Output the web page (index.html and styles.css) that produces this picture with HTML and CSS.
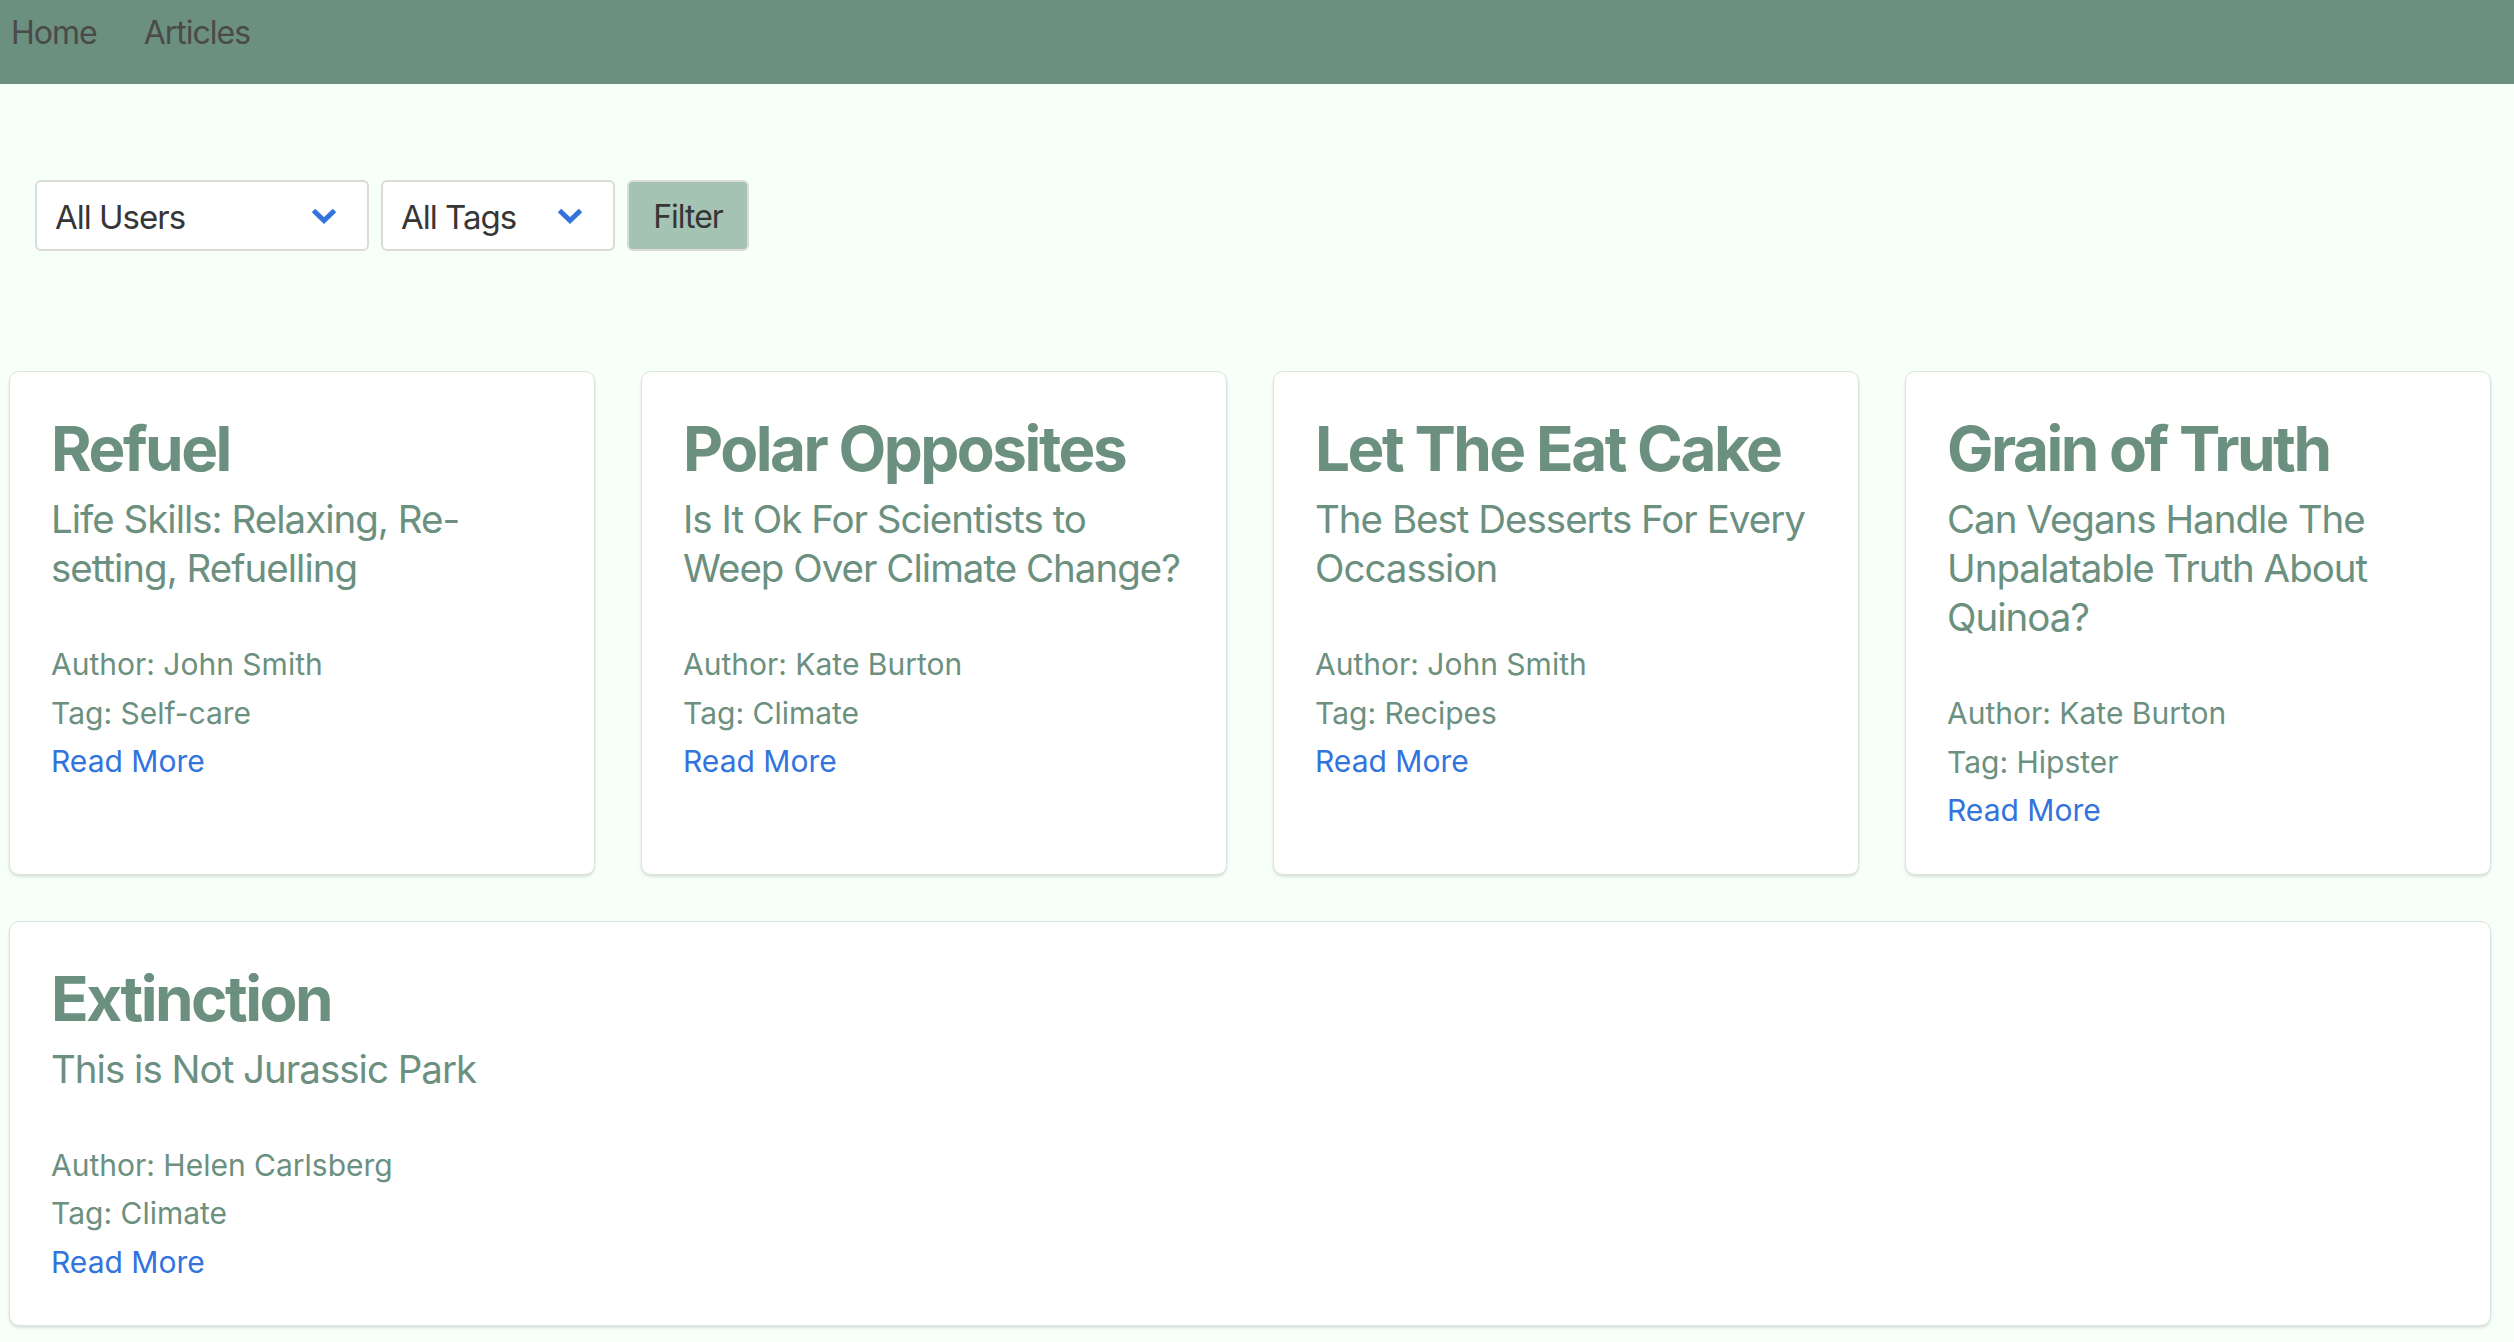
FILE: index.html
```html
<!DOCTYPE html>
<html lang="en">
<head>
<meta charset="utf-8">
<title>Articles</title>
<link rel="stylesheet" href="styles.css">
</head>
<body>
<nav class="navbar">
  <a class="nav-item" href="#">Home</a>
  <a class="nav-item" href="#">Articles</a>
</nav>

<form class="filters">
  <div class="select select-users">
    <select>
      <option>All Users</option>
      <option>John Smith</option>
      <option>Kate Burton</option>
      <option>Helen Carlsberg</option>
    </select>
    <svg class="chevron" viewBox="0 0 26 16" width="26" height="16" aria-hidden="true"><polyline points="2.5,2.5 13,12.5 23.5,2.5" fill="none" stroke="#3273dc" stroke-width="5" stroke-linejoin="miter" stroke-linecap="butt"/></svg>
  </div>
  <div class="select select-tags">
    <select>
      <option>All Tags</option>
      <option>Self-care</option>
      <option>Climate</option>
      <option>Recipes</option>
      <option>Hipster</option>
    </select>
    <svg class="chevron" viewBox="0 0 26 16" width="26" height="16" aria-hidden="true"><polyline points="2.5,2.5 13,12.5 23.5,2.5" fill="none" stroke="#3273dc" stroke-width="5" stroke-linejoin="miter" stroke-linecap="butt"/></svg>
  </div>
  <button type="button" class="btn-filter">Filter</button>
</form>

<main class="cards">
  <article class="card">
    <h1 class="card-title">Refuel</h1>
    <h2 class="card-subtitle">Life Skills: Relaxing, Re-setting, Refuelling</h2>
    <div class="card-meta">
      <p>Author: John Smith</p>
      <p>Tag: Self-care</p>
      <a class="read-more" href="#">Read More</a>
    </div>
  </article>
  <article class="card">
    <h1 class="card-title">Polar Opposites</h1>
    <h2 class="card-subtitle">Is It Ok For Scientists to Weep Over Climate Change?</h2>
    <div class="card-meta">
      <p>Author: Kate Burton</p>
      <p>Tag: Climate</p>
      <a class="read-more" href="#">Read More</a>
    </div>
  </article>
  <article class="card">
    <h1 class="card-title">Let The Eat Cake</h1>
    <h2 class="card-subtitle">The Best Desserts For Every Occassion</h2>
    <div class="card-meta">
      <p>Author: John Smith</p>
      <p>Tag: Recipes</p>
      <a class="read-more" href="#">Read More</a>
    </div>
  </article>
  <article class="card">
    <h1 class="card-title">Grain of Truth</h1>
    <h2 class="card-subtitle">Can Vegans Handle The Unpalatable Truth About Quinoa?</h2>
    <div class="card-meta">
      <p>Author: Kate Burton</p>
      <p>Tag: Hipster</p>
      <a class="read-more" href="#">Read More</a>
    </div>
  </article>
  <article class="card card-wide">
    <h1 class="card-title">Extinction</h1>
    <h2 class="card-subtitle">This is Not Jurassic Park</h2>
    <div class="card-meta">
      <p>Author: Helen Carlsberg</p>
      <p>Tag: Climate</p>
      <a class="read-more" href="#">Read More</a>
    </div>
  </article>
</main>
</body>
</html>
```
FILE: styles.css
```css
* { box-sizing: border-box; }

html, body {
  margin: 0;
  padding: 0;
}

body {
  background: #f6fff8;
  font-family: Inter, "Noto Sans", "Liberation Sans", sans-serif;
  color: #4a4a4a;
  min-height: 1342px;
}

/* ---------- navbar ---------- */
.navbar {
  height: 84px;
  background: #6b9080;
  display: flex;
  align-items: flex-start;
  gap: 47px;
  padding: 9px 0 0 11px;
}

.nav-item {
  font-size: 32px;
  line-height: 48px;
  letter-spacing: -1px;
  color: #4a4a4a;
  text-decoration: none;
}

/* ---------- filters ---------- */
.filters {
  display: flex;
  gap: 12px;
  margin: 96px 0 0 35px;
  height: 71px;
}

.select {
  position: relative;
  height: 71px;
}

.select-users { width: 334px; }
.select-tags { width: 234px; }

.select select {
  appearance: none;
  -webkit-appearance: none;
  width: 100%;
  height: 100%;
  margin: 0;
  background: #ffffff;
  border: 2px solid #dbdbdb;
  border-radius: 6px;
  padding: 2px 50px 0 18px;
  font-family: inherit;
  font-size: 33px;
  letter-spacing: -1px;
  color: #363636;
  outline: none;
}

.chevron {
  position: absolute;
  right: 32px;
  top: 28px;
  overflow: visible;
  pointer-events: none;
}

.btn-filter {
  width: 122px;
  height: 71px;
  margin: 0;
  padding: 2px 0 0;
  background: #a4c3b2;
  border: 2px solid #dbdbdb;
  border-radius: 6px;
  font-family: inherit;
  font-size: 32px;
  letter-spacing: -1px;
  color: #363636;
}

/* ---------- cards ---------- */
.cards {
  display: grid;
  grid-template-columns: repeat(4, 1fr);
  gap: 46px;
  padding: 0 23px 0 9px;
  margin-top: 120px;
}

.card {
  background: #ffffff;
  border: 1px solid #dce2de;
  border-radius: 10px;
  box-shadow: 0 2px 3px rgba(10, 10, 10, 0.12);
  padding: 40px 40px 39px 41px;
  color: #6b9080;
}

.card-wide {
  grid-column: 1 / -1;
}

.card-title {
  margin: 0;
  font-size: 62px;
  line-height: 74px;
  font-weight: 700;
  letter-spacing: -2.5px;
  color: #6b9080;
}

.card-subtitle {
  margin: 9px 0 0;
  font-size: 38.5px;
  line-height: 49px;
  font-weight: 400;
  letter-spacing: -1px;
  color: #6b9080;
}

.card-meta {
  margin-top: 47px;
  font-size: 30px;
  line-height: 48.5px;
}

.card-meta p {
  margin: 0;
}

.read-more {
  color: #3273dc;
  text-decoration: none;
}
```
